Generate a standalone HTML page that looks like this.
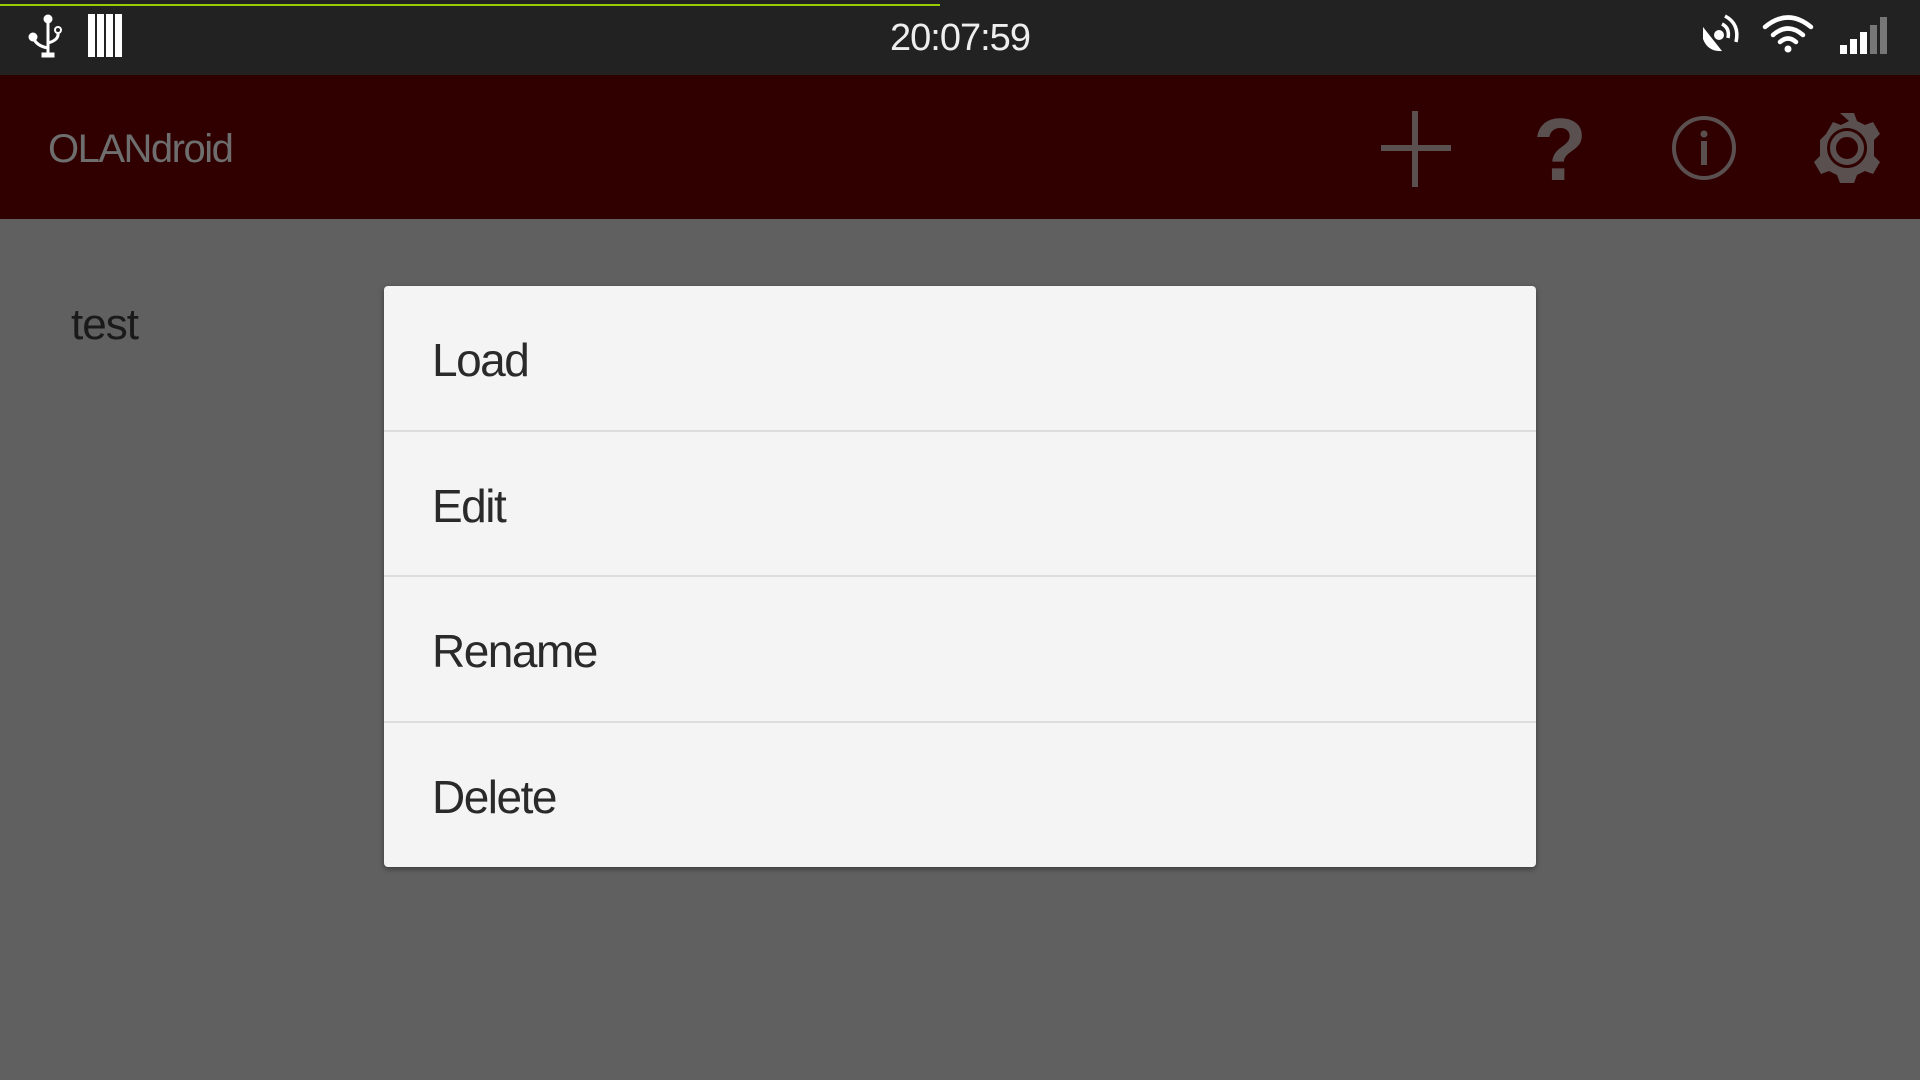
<!DOCTYPE html>
<html><head><meta charset="utf-8"><style>
*{margin:0;padding:0;box-sizing:border-box}
body{width:1920px;height:1080px;background:#606060;position:relative;overflow:hidden;font-family:"Liberation Sans",sans-serif}
#sb{position:absolute;left:0;top:0;width:1920px;height:75px;background:#222}
#green{position:absolute;left:0;top:4px;width:940px;height:2px;background:#99cc00}
#time{position:absolute;left:0;width:1920px;top:17px;text-align:center;color:#eee;font-size:38px;letter-spacing:-1px}
#ab{position:absolute;left:0;top:75px;width:1920px;height:144px;background:#300000}
#title{position:absolute;left:48px;top:127px;color:#6e6e6e;font-size:40px;letter-spacing:-1.5px}
#test{position:absolute;left:71px;top:300px;color:#1a1a1a;font-size:44px;letter-spacing:-1px}
#dlg{position:absolute;left:384px;top:286px;width:1152px;height:581px;background:#f4f4f4;border-radius:4px;box-shadow:0 2px 6px rgba(0,0,0,.4)}
.row{height:145.5px;border-bottom:2px solid #ddd;font-size:46px;color:#2a2a2a;padding-left:48px;line-height:148px;letter-spacing:-1.5px}
.row:last-child{border-bottom:none}
</style></head><body>
<div id="sb"><div id="green"></div>
<svg style="position:absolute;left:28px;top:14px" width="40" height="46" viewBox="0 0 40 46">
<g fill="#fff" stroke="#fff"><circle cx="20" cy="5" r="4"/><line x1="20" y1="5" x2="20" y2="40" stroke-width="3"/><rect x="14" y="39" width="12" height="4"/>
<circle cx="5" cy="23" r="4"/><path d="M5 23 Q8 32 20 34" fill="none" stroke-width="3"/>
<circle cx="30" cy="16" r="3" fill="none" stroke-width="2"/><path d="M30 19 Q31 26 20 29" fill="none" stroke-width="3"/></g></svg>
<svg style="position:absolute;left:88px;top:14px" width="34" height="43" viewBox="0 0 34 43"><g fill="#fff"><rect x="0" y="0" width="7" height="43"/><rect x="9" y="0" width="7" height="43"/><rect x="18" y="0" width="7" height="43"/><rect x="27" y="0" width="7" height="43"/></g></svg>
<div id="time">20:07:59</div>
<svg style="position:absolute;left:1700px;top:14px" width="44" height="40" viewBox="0 0 44 40"><g fill="#fff"><path d="M3 13 L22 37 Q8 38 3 25 Z"/><circle cx="19" cy="21" r="5"/></g><g fill="none" stroke="#fff" stroke-width="3.5"><path d="M22 10 Q30 14 28 24"/><path d="M25 2 Q40 10 36 28"/></g></svg>
<svg style="position:absolute;left:1762px;top:14px" width="52" height="40" viewBox="0 0 52 40"><g fill="none" stroke="#fff" stroke-width="4.5" stroke-linecap="round"><path d="M3 13 Q26 -6 49 13"/><path d="M11 21 Q26 8 41 21"/><path d="M18 28 Q26 21 34 28"/></g><circle cx="26" cy="35" r="3.5" fill="#fff"/></svg>
<svg style="position:absolute;left:1838px;top:16px" width="50" height="40" viewBox="0 0 50 40"><rect x="2" y="29" width="7" height="9" fill="#fff"/><rect x="12" y="23" width="7" height="15" fill="#fff"/><rect x="22" y="16" width="7" height="22" fill="#fff"/><rect x="32" y="9" width="7" height="29" fill="#777"/><rect x="42" y="1" width="7" height="37" fill="#777"/></svg>
</div>
<div id="ab"></div>
<div id="title">OLANdroid</div>
<svg style="position:absolute;left:1370px;top:100px" width="550" height="100" viewBox="1370 100 550 100">
<g fill="#5a5050">
<rect x="1381" y="145" width="70" height="6"/><rect x="1412" y="111" width="6" height="76"/>
<text x="1560" y="180" font-family="Liberation Sans" font-weight="bold" font-size="88" text-anchor="middle">?</text>
<circle cx="1704" cy="148" r="30" fill="none" stroke="#5a5050" stroke-width="4"/>
<circle cx="1704" cy="134" r="3.5"/><rect x="1701" y="141" width="6" height="24"/>
<path fill-rule="evenodd" d="M1840 113 h14 l3 8 l8 4 l8 -3 l7 12 l-6 6 v16 l6 6 l-7 12 l-8 -3 l-8 4 l-3 8 h-14 l-3 -8 l-8 -4 l-8 3 l-7 -12 l6 -6 v-16 l6 -6 l7 -12 l8 3 l8 -4 z M1847 128 a20 20 0 1 0 0.1 0 z"/>
<circle cx="1847" cy="148" r="14" fill="none" stroke="#5a5050" stroke-width="6"/>
</g></svg>
<div id="test">test</div>
<div id="dlg">
<div class="row">Load</div>
<div class="row">Edit</div>
<div class="row">Rename</div>
<div class="row">Delete</div>
</div>
</body></html>
